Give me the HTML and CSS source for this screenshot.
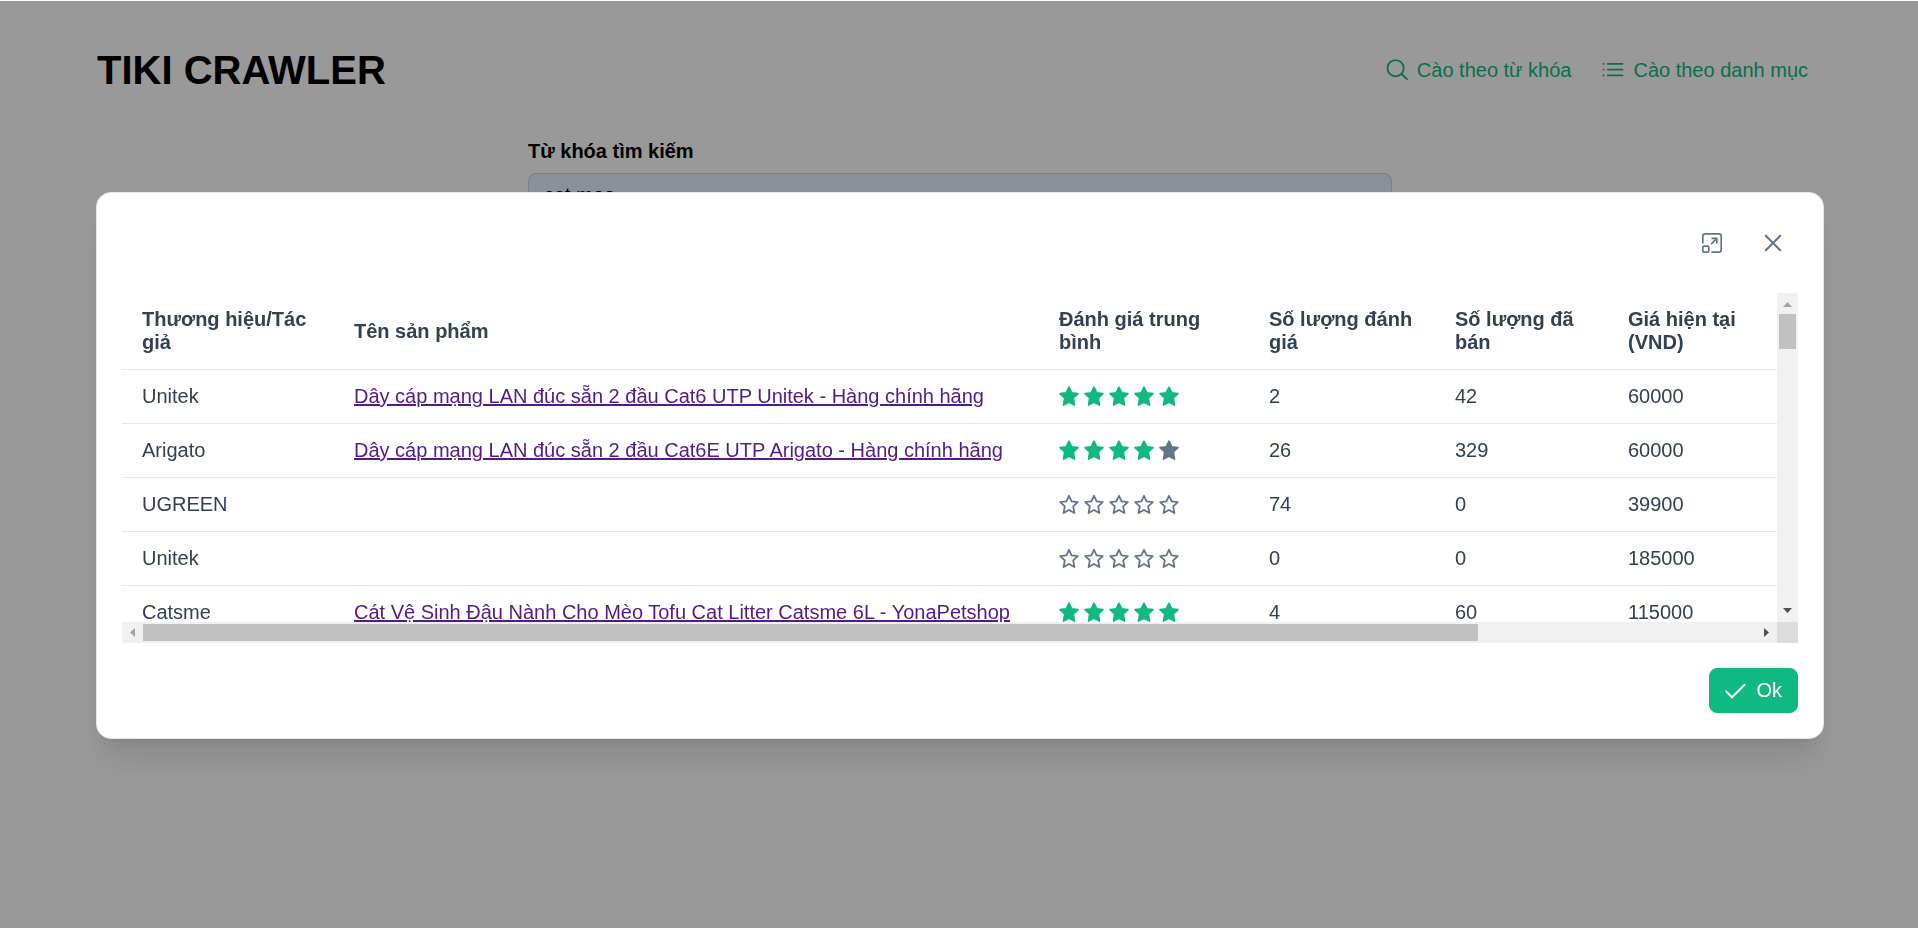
FILE: index.html
```html
<!DOCTYPE html>
<html lang="vi">
<head>
<meta charset="utf-8">
<meta name="viewport" content="width=device-width, initial-scale=1">
<title>TIKI CRAWLER</title>
<link rel="stylesheet" href="styles.css">
</head>
<body>
<svg class="sprite" aria-hidden="true">
  <symbol id="star-fill" viewBox="0 0.8 20 20"><path d="M10 .9 12.7 6.5 19 7.4 14.4 11.8 15.5 18.9 10 16 4.5 18.9 5.6 11.8 1 7.4 7.3 6.5Z" fill="currentColor" stroke="currentColor" stroke-width="1.6" stroke-linejoin="round"/></symbol>
  <symbol id="star" viewBox="0 0.6 20 20"><path d="M10 1.4 12.6 6.9 18.8 7.7 14.2 12 15.4 18.6 10 15.6 4.6 18.6 5.8 12 1.2 7.7 7.4 6.9Z" fill="none" stroke="currentColor" stroke-width="1.8" stroke-linejoin="round"/></symbol>
</svg>

<div class="page">
  <header class="topbar">
    <h1 class="brand">TIKI CRAWLER</h1>
    <nav class="nav">
      <a class="nav-link" href="#keyword">
        <svg class="icon" viewBox="0 0 20 20" aria-hidden="true"><g fill="none" stroke="currentColor" stroke-width="1.8" stroke-linecap="round"><circle cx="8.6" cy="8.2" r="8.1"/><path d="M14.6 14 20 19.2"/></g></svg>
        <span>Cào theo từ khóa</span>
      </a>
      <a class="nav-link" href="#category">
        <svg class="icon" viewBox="0 0 20 20" aria-hidden="true"><g fill="none" stroke="currentColor" stroke-width="1.8" stroke-linecap="round"><path d="M4.8 3.8H19.5M4.8 9.6H19.5M4.8 15.4H19.5"/><path d="M.4 3.8H.7M.4 9.6H.7M.4 15.4H.7"/></g></svg>
        <span>Cào theo danh mục</span>
      </a>
    </nav>
  </header>
  <main class="search-form">
    <label class="field-label" for="keyword">Từ khóa tìm kiếm</label>
    <input class="field-input" id="keyword" type="text" value="cat meo">
  </main>
</div>

<div class="mask">
  <section class="dialog" role="dialog" aria-modal="true">
    <div class="dialog-header">
      <button class="icon-button" type="button" aria-label="Phóng to">
        <svg class="icon" viewBox="0 0 20 20" aria-hidden="true"><g fill="none" stroke="currentColor" stroke-width="1.7" stroke-linecap="round" stroke-linejoin="round"><path d="M.8 9.8V3.2Q.8.8 3.2.8H16.8Q19.2.8 19.2 3.2V16.8Q19.2 19.2 16.8 19.2H10"/><rect x=".8" y="13.2" width="6" height="6" rx="1.2"/><path d="M9.6 10.6 14.6 5.6M10.2 5.4H14.8V10"/></g></svg>
      </button>
      <button class="icon-button" type="button" aria-label="Đóng">
        <svg class="icon" viewBox="0 0 20 20" aria-hidden="true"><path d="M2.8 2.8 17.2 17.2M17.2 2.8 2.8 17.2" fill="none" stroke="currentColor" stroke-width="2" stroke-linecap="round"/></svg>
      </button>
    </div>

    <div class="scroller">
      <div class="viewport">
        <table class="products">
          <colgroup>
            <col class="col-brand"><col class="col-name"><col class="col-rating"><col class="col-reviews"><col class="col-sold"><col class="col-price">
          </colgroup>
          <thead>
            <tr>
              <th scope="col">Thương hiệu/Tác giả</th>
              <th scope="col">Tên sản phẩm</th>
              <th scope="col">Đánh giá trung bình</th>
              <th scope="col">Số lượng đánh giá</th>
              <th scope="col">Số lượng đã bán</th>
              <th scope="col">Giá hiện tại (VND)</th>
            </tr>
          </thead>
          <tbody>
            <tr>
              <td>Unitek</td>
              <td><a class="product-link" href="#p1">Dây cáp mạng LAN đúc sẵn 2 đầu Cat6 UTP Unitek - Hàng chính hãng</a></td>
              <td><div class="rating"><svg class="on"><use href="#star-fill"/></svg><svg class="on"><use href="#star-fill"/></svg><svg class="on"><use href="#star-fill"/></svg><svg class="on"><use href="#star-fill"/></svg><svg class="on"><use href="#star-fill"/></svg></div></td>
              <td>2</td><td>42</td><td>60000</td>
            </tr>
            <tr>
              <td>Arigato</td>
              <td><a class="product-link" href="#p2">Dây cáp mạng LAN đúc sẵn 2 đầu Cat6E UTP Arigato - Hàng chính hãng</a></td>
              <td><div class="rating"><svg class="on"><use href="#star-fill"/></svg><svg class="on"><use href="#star-fill"/></svg><svg class="on"><use href="#star-fill"/></svg><svg class="on"><use href="#star-fill"/></svg><svg><use href="#star-fill"/></svg></div></td>
              <td>26</td><td>329</td><td>60000</td>
            </tr>
            <tr>
              <td>UGREEN</td>
              <td></td>
              <td><div class="rating"><svg><use href="#star"/></svg><svg><use href="#star"/></svg><svg><use href="#star"/></svg><svg><use href="#star"/></svg><svg><use href="#star"/></svg></div></td>
              <td>74</td><td>0</td><td>39900</td>
            </tr>
            <tr>
              <td>Unitek</td>
              <td></td>
              <td><div class="rating"><svg><use href="#star"/></svg><svg><use href="#star"/></svg><svg><use href="#star"/></svg><svg><use href="#star"/></svg><svg><use href="#star"/></svg></div></td>
              <td>0</td><td>0</td><td>185000</td>
            </tr>
            <tr>
              <td>Catsme</td>
              <td><a class="product-link" href="#p5">Cát Vệ Sinh Đậu Nành Cho Mèo Tofu Cat Litter Catsme 6L - YonaPetshop</a></td>
              <td><div class="rating"><svg class="on"><use href="#star-fill"/></svg><svg class="on"><use href="#star-fill"/></svg><svg class="on"><use href="#star-fill"/></svg><svg class="on"><use href="#star-fill"/></svg><svg class="on"><use href="#star-fill"/></svg></div></td>
              <td>4</td><td>60</td><td>115000</td>
            </tr>
          </tbody>
        </table>
      </div>
      <div class="bar bar-y" aria-hidden="true">
        <svg class="arrow dim" viewBox="0 0 21 21"><path d="M6 14 10.5 9 15 14Z"/></svg>
        <div class="track"><div class="thumb"></div></div>
        <svg class="arrow" viewBox="0 0 21 21"><path d="M6 7 10.5 12 15 7Z"/></svg>
      </div>
      <div class="bar bar-x" aria-hidden="true">
        <svg class="arrow dim" viewBox="0 0 21 21"><path d="M13 6 8 10.5 13 15Z"/></svg>
        <div class="track"><div class="thumb"></div></div>
        <svg class="arrow" viewBox="0 0 21 21"><path d="M8 6 13 10.5 8 15Z"/></svg>
      </div>
      <div class="corner"></div>
    </div>

    <div class="dialog-footer">
      <button class="ok-button" type="button">
        <svg class="icon" viewBox="0 0 20 20" aria-hidden="true"><path d="M1.2 10.4 7 16.2 19.6 3.8" fill="none" stroke="currentColor" stroke-width="2" stroke-linecap="round" stroke-linejoin="round"/></svg>
        <span>Ok</span>
      </button>
    </div>
  </section>
</div>
</body>
</html>
```

FILE: styles.css
```css
* {
  box-sizing: border-box;
}

body {
  margin: 0;
  min-height: 100vh;
  overflow: hidden;
  background: #fff;
  color: #000;
  font: 20px/23px "Liberation Sans", Arial, sans-serif;
}

.sprite {
  display: none;
}

.icon {
  flex: none;
  width: 20px;
  height: 20px;
  overflow: visible;
}

/* Page behind the dialog */
.topbar {
  display: flex;
  align-items: center;
  justify-content: space-between;
  padding: 47px 110px 47px 97px;
}

.brand {
  margin: 0;
  font-size: 40px;
  line-height: 46px;
}

.nav {
  display: flex;
  gap: 32px;
}

.nav-link {
  display: flex;
  align-items: center;
  gap: 10px;
  color: #10b981;
  text-decoration: none;
}

.search-form {
  display: flex;
  flex-direction: column;
  gap: 10px;
  margin: 0 526px 0 528px;
}

.field-label {
  font-weight: 700;
}

.field-input {
  width: 100%;
  padding: 10px 15px;
  border: 1px solid #cbd5e1;
  border-radius: 8px;
  background: #e8f0fe;
  color: #000;
  font: inherit;
}

/* Modal */
.mask {
  position: fixed;
  inset: 1px 0 0;
  display: flex;
  align-items: center;
  padding: 2px 94px 0 96px;
  background: rgba(0, 0, 0, 0.4);
}

.dialog {
  flex: 1;
  min-width: 0;
  display: flex;
  flex-direction: column;
  gap: 25px;
  padding: 25px;
  border: 1px solid #e2e8f0;
  border-radius: 15px;
  background: #fff;
  color: #334155;
  box-shadow: 0 25px 31px -6px rgba(0, 0, 0, 0.1), 0 10px 12px -8px rgba(0, 0, 0, 0.1);
}

.dialog-header {
  display: flex;
  justify-content: flex-end;
  gap: 11px;
}

.icon-button {
  display: flex;
  align-items: center;
  justify-content: center;
  width: 50px;
  height: 50px;
  padding: 0;
  border: 0;
  border-radius: 50%;
  background: transparent;
  color: #64748b;
}

.dialog-footer {
  display: flex;
  justify-content: flex-end;
}

.ok-button {
  display: flex;
  align-items: center;
  gap: 11px;
  padding: 10px 15px;
  border: 1px solid #10b981;
  border-radius: 8px;
  background: #10b981;
  color: #fff;
  font: inherit;
  font-weight: 500;
}

/* Table with its scroll bars */
.scroller {
  display: grid;
  grid-template-columns: minmax(0, 1fr) 21px;
  grid-template-rows: 329px 21px;
}

.viewport {
  overflow: hidden;
}

.products {
  width: 100%;
  table-layout: fixed;
  border-collapse: separate;
  border-spacing: 0;
}

.col-brand { width: 212px; }
.col-rating { width: 210px; }
.col-reviews { width: 186px; }
.col-sold { width: 173px; }
.col-price { width: 169px; }

.products th,
.products td {
  padding: 15px 20px;
  border-bottom: 1px solid #e2e8f0;
  text-align: left;
}

.product-link {
  color: #551a8b;
  white-space: nowrap;
}

.rating {
  display: flex;
  gap: 5px;
  color: #64748b;
}

.rating svg {
  width: 20px;
  height: 20px;
  overflow: visible;
}

.rating .on {
  color: #10b981;
}

#star,
#star-fill {
  overflow: visible;
}

.bar {
  display: flex;
  background: #f1f1f1;
}

.bar-y {
  flex-direction: column;
}

.arrow {
  flex: none;
  width: 21px;
  height: 21px;
  fill: #505050;
}

.arrow.dim {
  fill: #a3a3a3;
}

.track {
  flex: 1;
}

.thumb {
  background: #c1c1c1;
}

.bar-y .thumb {
  height: 35px;
  margin: 0 2px;
}

.bar-x .track {
  padding: 2px 0;
}

.bar-x .thumb {
  width: 82.75%;
  height: 17px;
}

.corner {
  background: #dcdcdc;
}
```
